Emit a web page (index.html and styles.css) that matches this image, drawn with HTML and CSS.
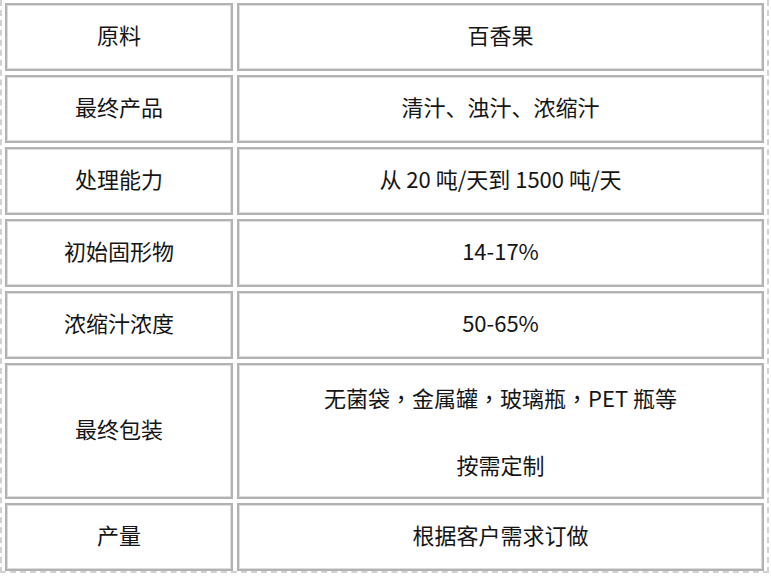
FILE: index.html
```html
<!DOCTYPE html>
<html lang="zh-CN">
<head>
<meta charset="utf-8">
<title>百香果</title>
<link rel="stylesheet" href="styles.css">
</head>
<body>
<div class="frame">
  <div class="grid">
    <div class="cell">原料</div>
    <div class="cell">百香果</div>

    <div class="cell">最终产品</div>
    <div class="cell">清汁、浊汁、浓缩汁</div>

    <div class="cell">处理能力</div>
    <div class="cell">从 20 吨/天到 1500 吨/天</div>

    <div class="cell">初始固形物</div>
    <div class="cell">14-17%</div>

    <div class="cell">浓缩汁浓度</div>
    <div class="cell">50-65%</div>

    <div class="cell">最终包装</div>
    <div class="cell stack">
      <div class="line">无菌袋<span class="punct" lang="zh-TW">，</span>金属罐<span class="punct" lang="zh-TW">，</span>玻璃瓶<span class="punct" lang="zh-TW">，</span>PET 瓶等</div>
      <div class="line">按需定制</div>
    </div>

    <div class="cell">产量</div>
    <div class="cell">根据客户需求订做</div>
  </div>
</div>
</body>
</html>
```
FILE: styles.css
```css
html, body {
  margin: 0;
  padding: 0;
  background: #ffffff;
}

body {
  font-family: "Noto Sans CJK SC", "Noto Sans", "Liberation Sans", sans-serif;
  font-size: 22px;
  color: #151515;
}

.frame {
  width: 759px;
  padding: 3px 3px 0 3px;
  border: 2px dashed #d2d2d2;
  border-top: none;
}

.grid {
  display: grid;
  grid-template-columns: 228px 1fr;
  grid-template-rows: repeat(5, 68px) 136px 68px;
  gap: 4px;
}

.cell {
  box-sizing: border-box;
  display: flex;
  align-items: center;
  justify-content: center;
  text-align: center;
  padding-bottom: 7px;
  border: 2px solid #b2b2b2;
  box-shadow: inset 0 0 0 1px #dedede;
  white-space: nowrap;
}

.stack {
  flex-direction: column;
  padding-bottom: 0;
}

.line {
  line-height: 67px;
  padding-bottom: 7px;
  height: 60px;
}

.punct {
  font-family: "Noto Sans CJK TC", "Noto Sans CJK JP", sans-serif;
}
```
